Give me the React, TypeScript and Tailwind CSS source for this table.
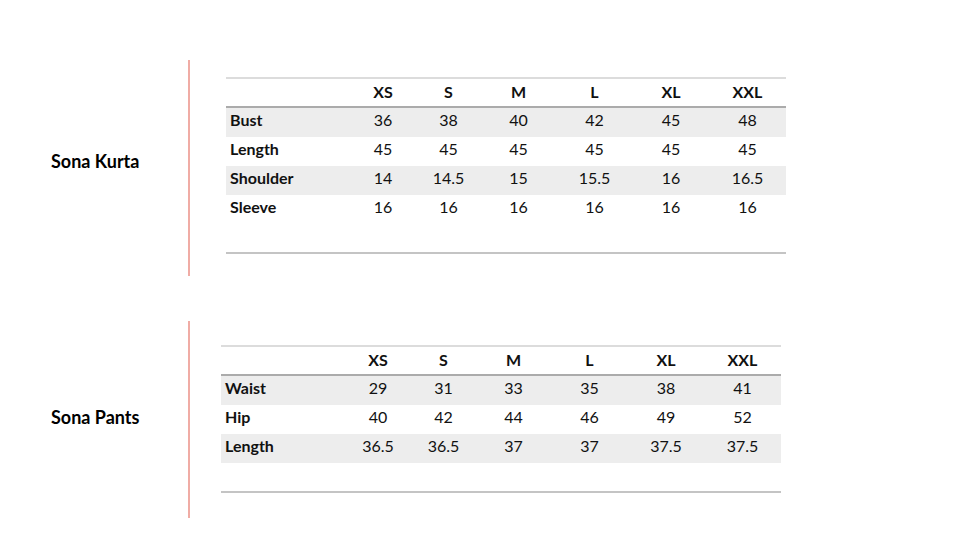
const sizes = ['XS', 'S', 'M', 'L', 'XL', 'XXL']

interface Row {
  label: string
  values: string[]
}

const kurta: Row[] = [
  { label: 'Bust', values: ['36', '38', '40', '42', '45', '48'] },
  { label: 'Length', values: ['45', '45', '45', '45', '45', '45'] },
  { label: 'Shoulder', values: ['14', '14.5', '15', '15.5', '16', '16.5'] },
  { label: 'Sleeve', values: ['16', '16', '16', '16', '16', '16'] },
]

const pants: Row[] = [
  { label: 'Waist', values: ['29', '31', '33', '35', '38', '41'] },
  { label: 'Hip', values: ['40', '42', '44', '46', '49', '52'] },
  { label: 'Length', values: ['36.5', '36.5', '37', '37', '37.5', '37.5'] },
]

const cols = 'grid grid-cols-[124px_66px_65px_75px_77px_76px_77px] items-center'

function SizeTable({ rows }: { rows: Row[] }) {
  return (
    <div className="w-[560px] border-t-2 border-[#dcdcdc] text-[16px] text-[#111]">
      <div className={`${cols} h-[29px] pb-[2px] border-b-2 border-[#ababab] font-bold`}>
        <div />
        {sizes.map((s) => (
          <div key={s} className="text-center">
            {s}
          </div>
        ))}
      </div>
      {rows.map((r, i) => (
        <div
          key={r.label}
          className={`${cols} h-[29px] pb-[5px] ${i % 2 === 0 ? 'bg-[#ededed]' : 'bg-white'}`}
        >
          <div className="pl-[4px] font-bold">{r.label}</div>
          {r.values.map((v, j) => (
            <div key={j} className="text-center">
              {v}
            </div>
          ))}
        </div>
      ))}
      <div className="h-[30px] border-b-2 border-[#c4c4c4]" />
    </div>
  )
}

export default function App() {
  return (
    <div
      className="w-[960px] h-[540px] bg-white pt-[60px] flex flex-col"
      style={{ fontFamily: 'Lato, "Open Sans", sans-serif' }}
    >
      <section className="flex h-[216px]">
        <div className="w-[188px] pl-[51px] pt-[88px] text-[18px] font-bold text-black">
          Sona Kurta
        </div>
        <div className="w-[2px] bg-[#f0aca5]" />
        <div className="ml-[36px] pt-[17px]">
          <SizeTable rows={kurta} />
        </div>
      </section>
      <section className="flex h-[197px] mt-[45px]">
        <div className="w-[188px] pl-[51px] pt-[83px] text-[18px] font-bold text-black">
          Sona Pants
        </div>
        <div className="w-[2px] bg-[#f0aca5]" />
        <div className="ml-[31px] pt-[24px]">
          <SizeTable rows={pants} />
        </div>
      </section>
    </div>
  )
}
